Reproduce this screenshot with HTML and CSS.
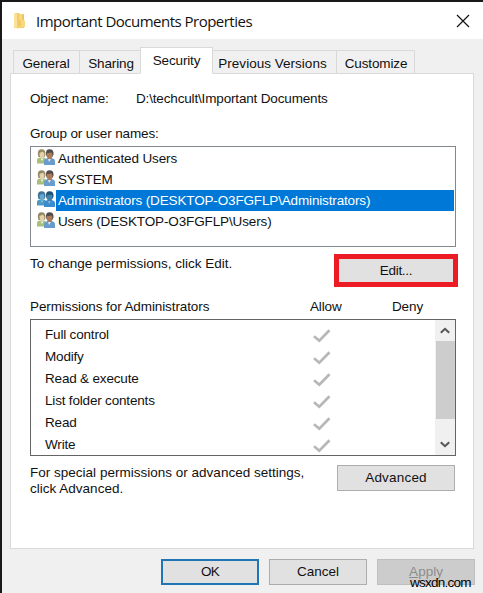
FILE: index.html
```html
<!DOCTYPE html>
<html lang="en">
<head>
<meta charset="utf-8">
<title>Important Documents Properties</title>
<link rel="stylesheet" href="styles.css">
</head>
<body>
<svg class="defs" width="0" height="0" aria-hidden="true">
  <symbol id="users" viewBox="0 0 18 16">
    <path d="M0 14.500V11q0-2 3-2.500l2-.7 3 1.200 2 2v3.500z" fill="var(--coat-a)"/>
    <path d="M.8 5q-.2-4.500 3.700-4.700Q8.700.3 8.500 5.500L7.500 8H1.500z" fill="var(--hair-a)"/>
    <path d="M2.500 4 6 2.500 7.500 5Q7.200 9 5 9.500 2.600 9 2.500 5z" fill="var(--skin-a)"/>
    <path d="M3.500 9.500 5 12l1.500-2.500z" fill="var(--shirt)"/>
    <path d="M7 16v-4q0-2 3-2.700l3-.8 3 1q2 .6 2 2.500v4z" fill="var(--coat-b)"/>
    <path d="M9 5.500Q8.500.3 12.500.3 17 .3 16.500 5.500L15.300 8H10z" fill="var(--hair-b)"/>
    <path d="M9.500 4.200 14.500 3.500l1 2Q15.300 10 12.500 10.500 9.800 9.500 9.500 6z" fill="var(--skin-b)"/>
    <path d="m11 10.300 1.200 2.700 1.600-2.900z" fill="var(--shirt)"/>
  </symbol>
  <symbol id="check" viewBox="0 0 18 14">
    <path d="M1 7.200 6.300 11.700 16.500 1.300" fill="none" stroke="#b7b7b7" stroke-width="2.700"/>
  </symbol>
</svg>
<div class="window">
  <header class="titlebar">
    <svg class="folder" width="14" height="17" viewBox="0 0 14 17">
      <path d="M1 1h5l1 1h4v14H1z" fill="#f3cb69"/>
      <path d="M1 1h3v14l2 1.500H3L1 15z" fill="#fbe29a"/>
      <path d="M6 2.500h4v6h2v6.500H6z" fill="#f8d980"/>
      <path d="M7 8v6M10 3v5" stroke="#e6b950"/>
    </svg>
    <h1 class="title">Important Documents Properties</h1>
    <svg class="close" width="14" height="14" viewBox="0 0 14 14"><path d="m1 1 12 12M13 1 1 13" stroke="#111" stroke-width="1.200"/></svg>
  </header>
  <nav class="tabs">
    <span class="tab general">General</span>
    <span class="tab sharing">Sharing</span>
    <span class="tab active">Security</span>
    <span class="tab previous">Previous Versions</span>
    <span class="tab customize">Customize</span>
  </nav>
  <main class="panel">
    <div class="object"><span class="object-label">Object name:</span><span class="path">D:\techcult\Important Documents</span></div>
    <div class="group-label">Group or user names:</div>
    <ul class="groups">
      <li><svg class="users"><use href="#users"/></svg><span class="auth">Authenticated Users</span></li>
      <li><svg class="users"><use href="#users"/></svg><span class="system">SYSTEM</span></li>
      <li class="selected"><svg class="users"><use href="#users"/></svg><span class="admins">Administrators (DESKTOP-O3FGFLP\Administrators)</span></li>
      <li><svg class="users"><use href="#users"/></svg><span class="local">Users (DESKTOP-O3FGFLP\Users)</span></li>
    </ul>
    <div class="edit-row"><span class="hint">To change permissions, click Edit.</span><button class="edit">Edit...</button></div>
    <div class="perm-head"><span class="perm-for">Permissions for Administrators</span><span class="allow">Allow</span><span class="deny">Deny</span></div>
    <div class="perms">
      <ul class="perm-list">
        <li><span>Full control</span><svg class="check"><use href="#check"/></svg></li>
        <li><span>Modify</span><svg class="check"><use href="#check"/></svg></li>
        <li><span>Read &amp; execute</span><svg class="check"><use href="#check"/></svg></li>
        <li><span>List folder contents</span><svg class="check"><use href="#check"/></svg></li>
        <li><span>Read</span><svg class="check"><use href="#check"/></svg></li>
        <li><span>Write</span><svg class="check"><use href="#check"/></svg></li>
      </ul>
      <div class="scrollbar">
        <svg class="arrow" viewBox="0 0 10 7"><path d="m.8 5.800 4.200-4 4.200 4" /></svg>
        <div class="thumb"></div>
        <svg class="arrow down" viewBox="0 0 10 7"><path d="m.8 1.200 4.200 4 4.200-4" /></svg>
      </div>
    </div>
    <div class="advanced-row"><p class="special">For special permissions or advanced settings,<br>click Advanced.</p><button class="advanced">Advanced</button></div>
  </main>
  <footer class="actions">
    <button class="ok">OK</button>
    <button class="cancel">Cancel</button>
    <button class="apply"><u>A</u>pply</button>
  </footer>
  <span class="watermark">wsxdn.com</span>
</div>
</body>
</html>
```
FILE: styles.css
```css
* { box-sizing: border-box; }
body { margin: 0; }
.defs { display: block; }
.window {
  position: relative;
  width: 483px;
  height: 593px;
  overflow: hidden;
  background: #f0f0f0;
  border-top: 2px solid #1a181a;
  border-left: 2px solid #1a181a;
  font: 13.5px/16px "Liberation Sans", Arial, sans-serif;
  letter-spacing: -.13px;
  color: #111;
  white-space: nowrap;
}
ul { list-style: none; margin: 0; padding: 0; }
button {
  font: inherit;
  letter-spacing: 0;
  color: #111;
  height: 26px;
  padding: 0;
  border: 1px solid #adadad;
  border-radius: 0;
  background: #e1e1e1;
}
.titlebar { display: flex; align-items: center; height: 37px; padding: 0 13px 0 11px; background: #fff; }
.title { margin: 0 auto 0 9px; font: 15px/20px "Open Sans", sans-serif; letter-spacing: -.51px; }
.tabs { display: flex; align-items: flex-end; height: 35px; padding-left: 11px; margin-bottom: -1px; }
.tab { height: 24px; padding-top: 5px; border: 1px solid #d9d9d9; border-left: 0; text-align: center; }
.general { width: 67px; padding-right: 1px; border-left: 1px solid #d9d9d9; }
.sharing { width: 61px; padding-left: 2px; }
.active { position: relative; width: 73px; height: 27px; margin-left: -1px; background: #fff; border-left: 1px solid #d9d9d9; border-bottom-color: #fff; }
.previous { width: 124px; letter-spacing: .02px; padding-right: 4px; }
.customize { width: 78px; padding-left: 1px; }
.panel { width: 464px; height: 476px; margin-left: 8px; padding: 17px 18px 0 19px; border: 1px solid #d9d9d9; background: #fff; }
.object { display: flex; }
.object-label { width: 106px; }
.path { letter-spacing: -.16px; }
.group-label { margin-top: 19px; }
.groups {
  width: 426px;
  height: 101px;
  margin-top: 4px;
  padding: 1px 1px 0 6px;
  border: 1px solid #828790;
  --coat-a: #a8bf78;
  --coat-b: #699bcb;
  --hair-a: #958763;
  --hair-b: #514c4b;
  --skin-a: #e2d2ab;
  --skin-b: #ac7c58;
  --shirt: #e9eef0;
}
.groups li { display: flex; height: 21px; }
.users { width: 18px; height: 16px; margin-top: 1px; }
.groups span { flex: 1; margin-left: 1px; padding-left: 2px; line-height: 21px; }
.selected {
  --coat-a: #4d99c4;
  --coat-b: #3c8bcd;
  --hair-a: #3f7194;
  --hair-b: #205276;
  --skin-a: #64a9cb;
  --skin-b: #4082aa;
  --shirt: #86bce3;
}
.groups .admins { background: #0078d7; color: #fff; letter-spacing: -.15px; }
.edit-row { display: flex; justify-content: space-between; margin-top: 7px; }
.hint { padding-top: 2px; letter-spacing: -.01px; }
.edit { width: 124px; height: 33px; margin-right: -3px; border: 5px solid #ed1c24; letter-spacing: -.3px; }
.perm-head { display: flex; margin-top: 12px; }
.perm-for { width: 280px; letter-spacing: -.1px; }
.allow { width: 82px; }
.perms { display: flex; width: 426px; height: 137px; margin-top: 4px; border: 1px solid #646464; }
.perm-list { flex: 1; padding: 4px 0 0 14px; }
.perm-list li { display: flex; height: 22px; line-height: 22px; }
.perm-list span { width: 268px; letter-spacing: -.18px; }
.check { width: 18px; height: 14px; margin-top: 5px; }
.scrollbar { display: flex; flex-direction: column; align-items: center; width: 20px; background: #f0f0f0; }
.arrow { width: 10px; height: 7px; margin: 7px 0; fill: none; stroke: #555; stroke-width: 2; }
.thumb { width: 19px; height: 78px; background: #cdcdcd; }
.down { margin-top: 22px; }
.advanced-row { display: flex; justify-content: space-between; margin-top: 9px; }
.special { margin: 0; letter-spacing: .01px; }
.advanced { width: 118px; letter-spacing: .2px; }
.actions { display: flex; justify-content: flex-end; gap: 10px; padding: 10px 8px 0 0; }
.actions button { width: 98px; }
.actions .ok { border: 2px solid #2075b5; letter-spacing: -.8px; }
.actions .apply { background: #ccc; border-color: #bfbfbf; color: #8d8d8d; }
.watermark { position: absolute; left: 408px; top: 573px; color: #000; letter-spacing: -.75px; }
```
